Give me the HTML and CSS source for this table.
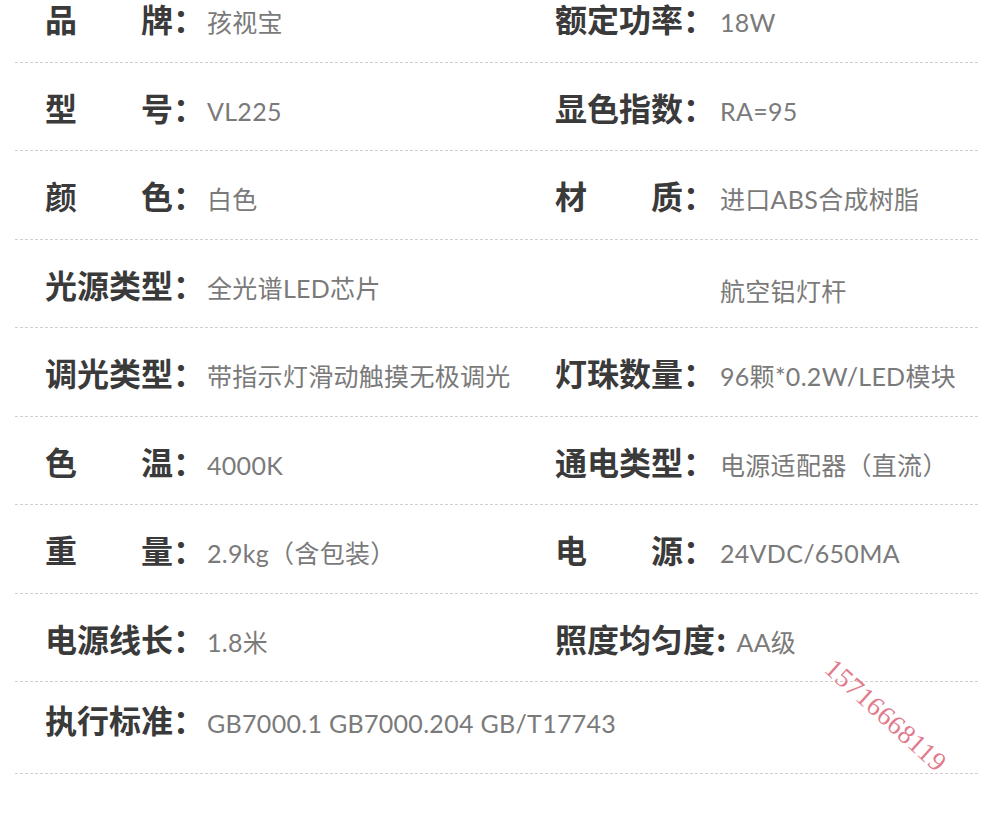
FILE: index.html
```html
<!DOCTYPE html>
<html lang="zh-CN">
<head>
<meta charset="utf-8">
<title>产品参数</title>
<link rel="stylesheet" href="styles.css">
</head>
<body>
<div class="specs">
  <div class="row">
    <div class="cell"><span class="lbl"><span class="chars"><i>品</i><i>牌</i></span><span class="colon">：</span></span><span class="val">孩视宝</span></div>
    <div class="cell"><span class="lbl"><span class="chars"><i>额</i><i>定</i><i>功</i><i>率</i></span><span class="colon">：</span></span><span class="val">18W</span></div>
  </div>
  <div class="row">
    <div class="cell"><span class="lbl"><span class="chars"><i>型</i><i>号</i></span><span class="colon">：</span></span><span class="val">VL225</span></div>
    <div class="cell"><span class="lbl"><span class="chars"><i>显</i><i>色</i><i>指</i><i>数</i></span><span class="colon">：</span></span><span class="val">RA=95</span></div>
  </div>
  <div class="row">
    <div class="cell"><span class="lbl"><span class="chars"><i>颜</i><i>色</i></span><span class="colon">：</span></span><span class="val">白色</span></div>
    <div class="cell"><span class="lbl"><span class="chars"><i>材</i><i>质</i></span><span class="colon">：</span></span><span class="val">进口ABS合成树脂</span></div>
  </div>
  <div class="row">
    <div class="cell"><span class="lbl"><span class="chars"><i>光</i><i>源</i><i>类</i><i>型</i></span><span class="colon">：</span></span><span class="val">全光谱LED芯片</span></div>
    <div class="cell"><span class="lbl empty"></span><span class="val">航空铝灯杆</span></div>
  </div>
  <div class="row">
    <div class="cell"><span class="lbl"><span class="chars"><i>调</i><i>光</i><i>类</i><i>型</i></span><span class="colon">：</span></span><span class="val">带指示灯滑动触摸无极调光</span></div>
    <div class="cell"><span class="lbl"><span class="chars"><i>灯</i><i>珠</i><i>数</i><i>量</i></span><span class="colon">：</span></span><span class="val">96颗*0.2W/LED模块</span></div>
  </div>
  <div class="row">
    <div class="cell"><span class="lbl"><span class="chars"><i>色</i><i>温</i></span><span class="colon">：</span></span><span class="val">4000K</span></div>
    <div class="cell"><span class="lbl"><span class="chars"><i>通</i><i>电</i><i>类</i><i>型</i></span><span class="colon">：</span></span><span class="val">电源适配器（直流）</span></div>
  </div>
  <div class="row">
    <div class="cell"><span class="lbl"><span class="chars"><i>重</i><i>量</i></span><span class="colon">：</span></span><span class="val">2.9kg（含包装）</span></div>
    <div class="cell"><span class="lbl"><span class="chars"><i>电</i><i>源</i></span><span class="colon">：</span></span><span class="val">24VDC/650MA</span></div>
  </div>
  <div class="row">
    <div class="cell"><span class="lbl"><span class="chars"><i>电</i><i>源</i><i>线</i><i>长</i></span><span class="colon">：</span></span><span class="val">1.8米</span></div>
    <div class="cell"><span class="lbl wide"><span class="chars"><i>照</i><i>度</i><i>均</i><i>匀</i><i>度</i></span><span class="colon">:</span></span><span class="val">AA级</span></div>
  </div>
  <div class="row last">
    <div class="cell"><span class="lbl"><span class="chars"><i>执</i><i>行</i><i>标</i><i>准</i></span><span class="colon">：</span></span><span class="val">GB7000.1 GB7000.204 GB/T17743</span></div>
  </div>
  <div class="watermark">15716668119</div>
</div>
</body>
</html>
```

FILE: styles.css
```css
html, body {
  margin: 0;
  padding: 0;
  background: #ffffff;
}

body {
  width: 990px;
  height: 817px;
  overflow: hidden;
  font-family: "Noto Sans CJK SC", sans-serif;
}

.specs {
  position: relative;
  margin: -26px 12px 0 15px;
}

.row {
  box-sizing: border-box;
  height: 88.5px;
  display: grid;
  grid-template-columns: 510px 1fr;
  align-items: center;
  padding: 5px 0 0 30px;
  border-bottom: 1px dashed #d0d0d0;
}

.row.last {
  height: 92px;
  padding: 0 0 14px 30px;
}

.cell {
  display: flex;
  align-items: baseline;
  white-space: nowrap;
}

.lbl {
  display: flex;
  align-items: baseline;
  font-family: "Noto Sans CJK SC", sans-serif;
  font-weight: 700;
  font-size: 32px;
  color: #3a3a3a;
  line-height: 40px;
}

.lbl.empty {
  width: 157px;
  height: 40px;
}

.chars {
  display: flex;
  justify-content: space-between;
  width: 128px;
}

.lbl.wide .chars {
  width: 160px;
}

.chars i {
  font-style: normal;
}

.colon {
  width: 29px;
}

.lbl.wide .colon {
  width: auto;
  margin-left: 1px;
  margin-right: 2px;
}

.val {
  margin-left: 5px;
  font-family: "Lato", "Noto Sans CJK SC", sans-serif;
  font-size: 25px;
  letter-spacing: 0.3px;
  color: #7a7a7a;
  line-height: 40px;
}

.cell + .cell .val {
  margin-left: 8px;
}

.watermark {
  position: absolute;
  left: 824px;
  top: 679px;
  font-family: "Liberation Serif", serif;
  font-size: 27px;
  line-height: 30px;
  color: #e27a8c;
  transform: rotate(42deg);
  transform-origin: 0 0;
  white-space: nowrap;
  letter-spacing: 0.5px;
}
```
